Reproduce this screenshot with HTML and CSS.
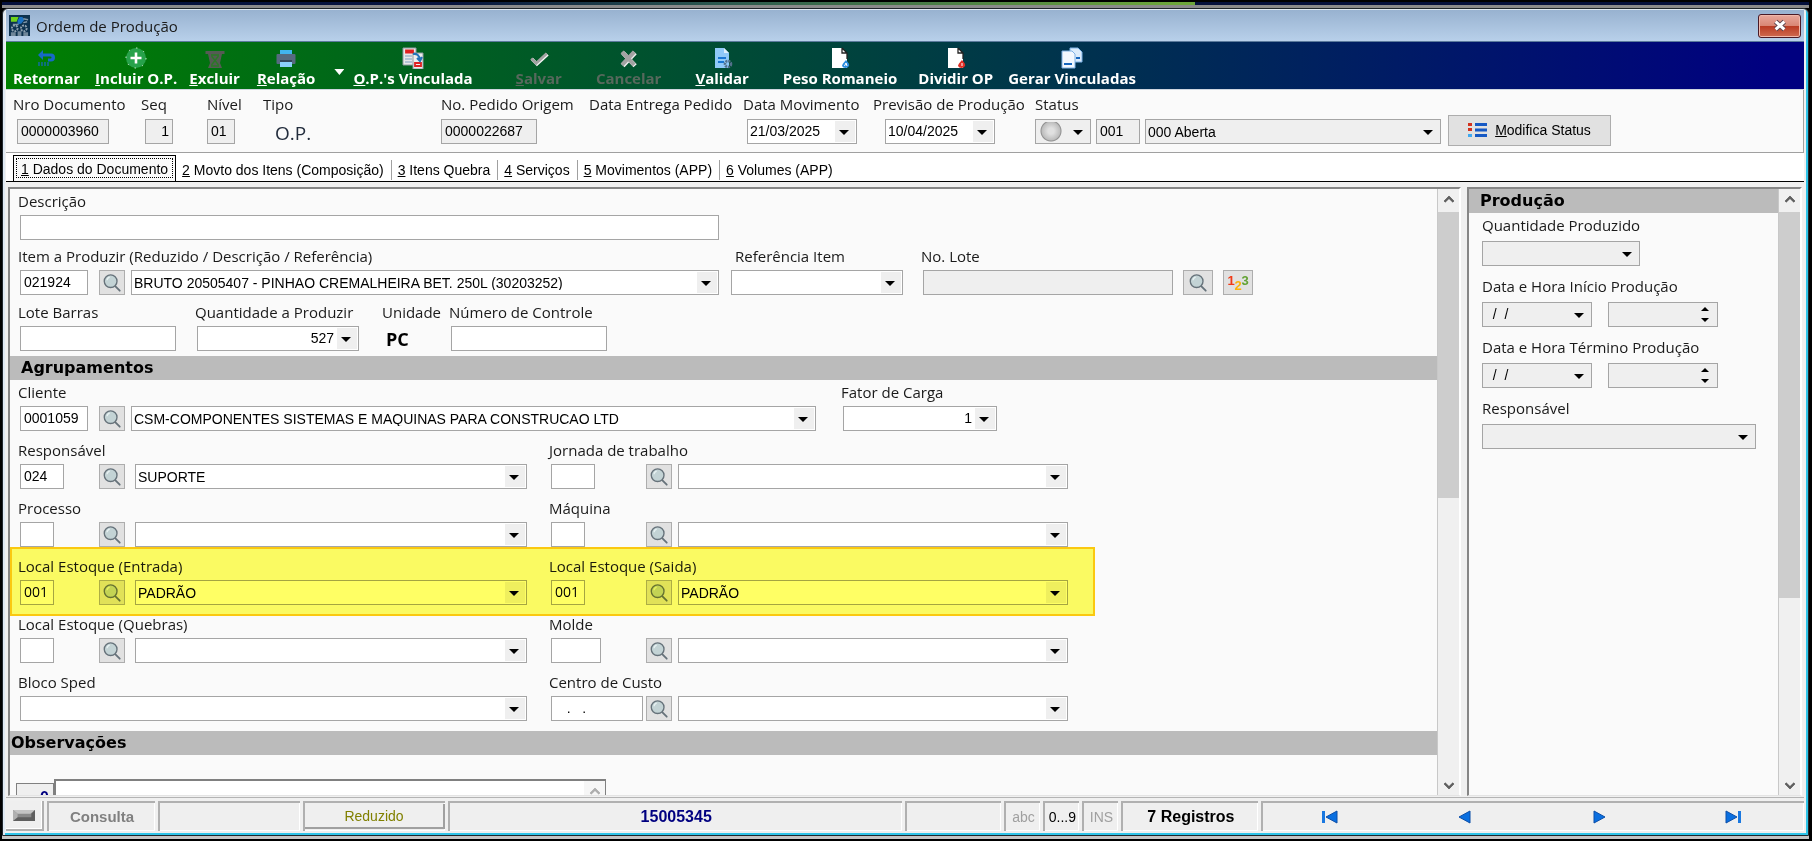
FILE: index.html
```html
<!DOCTYPE html>
<html lang="pt-BR">
<head>
<meta charset="utf-8">
<title>Ordem de Produção</title>
<link rel="stylesheet" href="styles.css">
</head>
<body>
<svg class="defs" aria-hidden="true">
  <symbol id="lens" viewBox="0 0 22 22">
    <path d="M14.500 14.500l5 5" stroke="#66727a" stroke-width="2" stroke-linecap="round"/>
    <circle cx="9.500" cy="9" r="7" fill="#c3d3d5" stroke="#66727a" stroke-width="1.500"/>
    <path d="M5.500 8a4 4 0 0 1 3-3.500" fill="none" stroke="#e6f0f1" stroke-width="1.500"/>
  </symbol>
</svg>
<div class="desk-strip"></div>
<main class="window">
  <header class="titlebar">
    <svg class="app-icon" viewBox="0 0 22 22" aria-hidden="true">
      <path fill="#0d3350" d="M0 0h22v22H0z"/>
      <path fill="#6fd21c" d="M2 2h8l-2 5H2z"/><path fill="#1c73c4" d="M9 6l2-4h3l2 3-3 4-4 1z"/>
      <path d="M15 4l5 1M15 8l4-1M4 10h6" stroke="#7f97a8" stroke-width="1.500"/>
      <g fill="none" stroke="#8ea2b0" stroke-width="2" stroke-dasharray="2 1"><circle cx="6" cy="14" r="3"/><circle cx="15.500" cy="14" r="3"/></g>
      <path fill="#70889a" d="M2 18h5v4H2zM9 17h4v5H9zM15 18h5v4h-5z"/>
    </svg>
    <h1>Ordem de Produção</h1>
    <button class="close" aria-label="Fechar"><svg viewBox="0 0 14 12"><path d="M3 2.500l8 7M11 2.500l-8 7" stroke="#5b4650" stroke-width="4.500"/><path d="M3 2.500l8 7M11 2.500l-8 7" stroke="#fff" stroke-width="2.800"/></svg></button>
  </header>

  <nav class="toolbar">
    <button class="tool"><svg viewBox="0 0 22 22"><path d="M2 8l5-5v3.500h8q4 0 4 4t-4 4h-3v-3h2.500q1 0 1-1t-1-1H7V13z" fill="#1769c8"/><path d="M3 15v4M6 15v4M9 15v4M12 15v4" stroke="#1769c8" stroke-width="1.200"/></svg><span>Retornar</span></button>
    <button class="tool t-incluir"><svg viewBox="0 0 22 22"><circle cx="11" cy="11" r="10" fill="#27a24b"/><circle cx="11" cy="11" r="10" fill="none" stroke="#d5ecd9" stroke-dasharray="1.500 6.300"/><path d="M11 5.500v11M5.500 11h11" stroke="#fff" stroke-width="2.600"/></svg><span><u>I</u>ncluir O.P.</span></button>
    <button class="tool t-excluir"><svg viewBox="0 0 22 22"><path d="M1.500 4h19v3h-19z" fill="#555b54"/><path d="M4 7h14l-2 9 2 5H4l2-5z" fill="#555b54"/><path d="M7.500 9l7 9M14.500 9l-7 9M7 8h8M7 19h8" stroke="#2a7a26" stroke-width="1.300"/></svg><span><u>E</u>xcluir</span></button>
    <button class="tool"><svg viewBox="0 0 22 22"><path d="M5 3h12v6H5z" fill="#42b4ee"/><rect x="1.500" y="7" width="19" height="10" rx="1" fill="#566a80"/><path d="M5 14h12v6H5z" fill="#8bd0fa"/><path d="M5 13h12v2H5z" fill="#33475d"/></svg><span><u>R</u>elação</span></button>
    <button class="drop" aria-label="Mais relações"></button>
    <button class="tool t-vinc"><svg viewBox="0 0 22 22"><path d="M1 1h13v17H1z" fill="#e8e8e8" stroke="#8f9aa0"/><path d="M11 6h10v16H11z" fill="#eee" stroke="#8f9aa0"/><path d="M4 3.500h7v2H4zM13 16h6v3h-6z" fill="none" stroke="#e02020" stroke-width="1.800"/><path d="M3 9h7M3 12h7M3 15h7" stroke="#7a9fc0"/><path d="M11 7q6-1 7 6m-3-2l3 3 2-4" fill="none" stroke="#2374b8" stroke-width="2"/></svg><span><u>O</u>.P.'s Vinculada</span></button>
    <button class="tool off t-salvar"><svg viewBox="-2 -3 27 27"><path d="M3 12l6 6L22 6" fill="none" stroke="#f4f4f4" stroke-width="4"/><path d="M2 11l6 6L21 5" fill="none" stroke="#a2a2a2" stroke-width="3.500"/></svg><span><u>S</u>alvar</span></button>
    <button class="tool off t-cancelar"><svg viewBox="-2 -3 27 27"><path d="M4 4l15 16M19 4L4 20" stroke="#eee" stroke-width="5.500"/><path d="M3 3l15 16M18 3L3 19" stroke="#a2a2a2" stroke-width="5"/></svg><span>Cancelar</span></button>
    <button class="tool t-validar"><svg viewBox="0 0 22 22"><path d="M4 1h9l5 5v15H4z" fill="#90c9f8"/><path d="M13 1l5 5h-5z" fill="#e0f0fd"/><path d="M7 11h8M7 15h6" stroke="#1976d2" stroke-width="2"/><circle cx="17" cy="17" r="3" fill="none" stroke="#53708b" stroke-width="2.600" stroke-dasharray="2 .8"/></svg><span><u>V</u>alidar</span></button>
    <button class="tool t-peso"><svg viewBox="0 0 22 22"><path d="M3 1h10l5 5v15H3z" fill="#fff"/><path d="M13 1l5 5v6M13 1v5h5" fill="none" stroke="#222" stroke-width="1.300"/><path d="M17 13q4 4 3 6-1 2-3.500 2T13 19q0-2 4-6z" fill="#2c8ee0"/><path d="M15.500 19l1.500-3 1 3" stroke="#fff" fill="none"/></svg><span>Peso Romaneio</span></button>
    <button class="tool t-dividir"><svg viewBox="0 0 22 22"><path d="M3 1h10l5 5v15H3z" fill="#fff"/><path d="M13 1l5 5v6M13 1v5h5" fill="none" stroke="#222" stroke-width="1.300"/><path d="M17 13q4 4 3 6-1 2-3.500 2T13 19q0-2 4-6z" fill="#e02f26"/><path d="M17 16v3" stroke="#fff"/></svg><span>Dividir OP</span></button>
    <button class="tool"><svg viewBox="0 0 22 22"><path d="M9 1h8l4 4v10H9z" fill="#dcecfb" stroke="#7fb2e6"/><path d="M1 4h10l3 3v14H1z" fill="#f3f8fe" stroke="#7fb2e6"/><path d="M3 17h8M15 11h4" stroke="#1666bd" stroke-width="2"/></svg><span>Gerar Vinculadas</span></button>
  </nav>

  <section class="doc">
    <div class="field c-doc"><label for="doc">Nro Documento</label><div class="line in4"><input id="doc" class="box w92 ro" readonly value="0000003960"></div></div>
    <div class="field c-seq"><label for="seq">Seq</label><div class="line in4"><input id="seq" class="box w28 ro num" readonly value="1"></div></div>
    <div class="field c-niv"><label for="niv">Nível</label><div class="line"><input id="niv" class="box w28 ro" readonly value="01"></div></div>
    <div class="field c-tipo"><span class="lbl">Tipo</span><div class="line in12"><output class="op">O.P.</output></div></div>
    <div class="field c-ped"><label for="ped">No. Pedido Origem</label><div class="line"><input id="ped" class="box w96 ro" readonly value="0000022687"></div></div>
    <div class="field c-ent"><span class="lbl">Data Entrega Pedido</span></div>
    <div class="field c-mov"><label for="mov">Data Movimento</label><div class="line in4"><span class="combo w110"><input id="mov" value="21/03/2025"></span></div></div>
    <div class="field c-prev"><label for="prev">Previsão de Produção</label><div class="line in12"><span class="combo w110"><input id="prev" value="10/04/2025"></span></div></div>
    <div class="field c-status"><label for="st">Status</label>
      <div class="line gap5">
        <span class="combo ro w56 ball"><select aria-label="Cor do status"><option></option></select></span>
        <input class="box w44 ro" readonly value="001" aria-label="Código do status">
        <span class="combo ro grow"><select id="st"><option>000 Aberta</option></select></span>
      </div>
    </div>
    <button class="btn-status"><svg viewBox="0 0 20 16"><path d="M0 1h4v3H0zM0 6h4v3H0z" fill="#d2321e"/><path d="M0 12h4v3H0z" fill="#3fa9f0"/><path d="M7 2.500h12M7 8h12M7 13.500h12" stroke="#1659c4" stroke-width="3"/></svg><span><u>M</u>odifica Status</span></button>
  </section>

  <div class="tabs" role="tablist">
    <button role="tab" class="tab on" aria-selected="true"><u>1</u> Dados do Documento</button>
    <button role="tab" class="tab"><u>2</u> Movto dos Itens (Composição)</button>
    <button role="tab" class="tab"><u>3</u> Itens Quebra</button>
    <button role="tab" class="tab"><u>4</u> Serviços</button>
    <button role="tab" class="tab"><u>5</u> Movimentos (APP)</button>
    <button role="tab" class="tab"><u>6</u> Volumes (APP)</button>
  </div>

  <div class="panes">
    <section class="pane form">
      <div class="content">
        <div class="rows top">
          <div class="row"><div class="field f-desc"><label for="desc">Descrição</label><div class="line in2"><input id="desc" class="box grow"></div></div></div>
          <div class="row">
            <div class="field f-item"><label for="item">Item a Produzir (Reduzido / Descrição / Referência)</label>
              <div class="line in2"><span class="slot"><input id="item" class="box w68" value="021924"></span><button class="sq" aria-label="Pesquisar item"><svg><use href="#lens"/></svg></button><span class="combo grow ml6"><select aria-label="Descrição do item"><option>BRUTO 20505407 - PINHAO CREMALHEIRA BET. 250L (30203252)</option></select></span></div></div>
            <div class="field f-ref"><label for="ref" class="in4">Referência Item</label><div class="line"><span class="combo w172"><select id="ref"><option></option></select></span></div></div>
            <div class="field"><label for="lote">No. Lote</label><div class="line in2 gap10"><input id="lote" class="box ro w250" readonly><button class="sq wide" aria-label="Pesquisar lote"><svg><use href="#lens"/></svg></button><button class="sq wide n123" aria-label="Numeração"><b>1</b><b>2</b><b>3</b></button></div></div>
          </div>
          <div class="row late">
            <div class="field f-barras"><label for="barras">Lote Barras</label><div class="line in2"><input id="barras" class="box w156"></div></div>
            <div class="field f-qtd"><label for="qtd">Quantidade a Produzir</label><div class="line in2"><span class="combo num w162"><input id="qtd" value="527"></span></div></div>
            <div class="field f-un"><span class="lbl">Unidade</span><div class="line in4"><output class="pc">PC</output></div></div>
            <div class="field"><label for="ctrl">Número de Controle</label><div class="line in2"><input id="ctrl" class="box w156"></div></div>
          </div>
        </div>
        <h2 class="bar pad">Agrupamentos</h2>
        <div class="rows group">
          <div class="row">
            <div class="field f-cli"><label for="cli">Cliente</label><div class="line in2"><span class="slot"><input id="cli" class="box w68" value="0001059"></span><button class="sq" aria-label="Pesquisar cliente"><svg><use href="#lens"/></svg></button><span class="combo grow ml6"><select aria-label="Nome do cliente"><option>CSM-COMPONENTES SISTEMAS E MAQUINAS PARA CONSTRUCAO LTD</option></select></span></div></div>
            <div class="field"><label for="fator">Fator de Carga</label><div class="line in2"><span class="combo num w154"><input id="fator" value="1"></span></div></div>
          </div>
          <div class="row pair">
            <div class="field"><label for="resp">Responsável</label><div class="line in2"><span class="slot"><input id="resp" class="box w44" value="024"></span><button class="sq" aria-label="Pesquisar responsável"><svg><use href="#lens"/></svg></button><span class="combo grow ml10"><select aria-label="Nome do responsável"><option>SUPORTE</option></select></span></div></div>
            <div class="field"><label for="jor">Jornada de trabalho</label><div class="line in2"><span class="slot r"><input id="jor" class="box w44"></span><button class="sq" aria-label="Pesquisar jornada"><svg><use href="#lens"/></svg></button><span class="combo grow ml6"><select aria-label="Descrição da jornada"><option></option></select></span></div></div>
          </div>
          <div class="row pair">
            <div class="field"><label for="proc">Processo</label><div class="line in2"><span class="slot"><input id="proc" class="box w34"></span><button class="sq" aria-label="Pesquisar processo"><svg><use href="#lens"/></svg></button><span class="combo grow ml10"><select aria-label="Descrição do processo"><option></option></select></span></div></div>
            <div class="field"><label for="maq">Máquina</label><div class="line in2"><span class="slot r"><input id="maq" class="box w34"></span><button class="sq" aria-label="Pesquisar máquina"><svg><use href="#lens"/></svg></button><span class="combo grow ml6"><select aria-label="Descrição da máquina"><option></option></select></span></div></div>
          </div>
          <div class="row pair marked">
            <div class="field"><label for="ent">Local Estoque (Entrada)</label><div class="line in2"><span class="slot"><input id="ent" class="box w34 code" value="001"></span><button class="sq" aria-label="Pesquisar local de entrada"><svg><use href="#lens"/></svg></button><span class="combo grow ml10"><select aria-label="Local de entrada"><option>PADRÃO</option></select></span></div></div>
            <div class="field"><label for="sai">Local Estoque (Saida)</label><div class="line in2"><span class="slot r"><input id="sai" class="box w34 code" value="001"></span><button class="sq" aria-label="Pesquisar local de saída"><svg><use href="#lens"/></svg></button><span class="combo grow ml6"><select aria-label="Local de saída"><option>PADRÃO</option></select></span></div></div>
          </div>
          <div class="row pair">
            <div class="field"><label for="que">Local Estoque (Quebras)</label><div class="line in2"><span class="slot"><input id="que" class="box w34"></span><button class="sq" aria-label="Pesquisar local de quebras"><svg><use href="#lens"/></svg></button><span class="combo grow ml10"><select aria-label="Local de quebras"><option></option></select></span></div></div>
            <div class="field"><label for="mol">Molde</label><div class="line in2"><span class="slot r"><input id="mol" class="box w50"></span><button class="sq" aria-label="Pesquisar molde"><svg><use href="#lens"/></svg></button><span class="combo grow ml6"><select aria-label="Descrição do molde"><option></option></select></span></div></div>
          </div>
          <div class="row pair">
            <div class="field"><label for="sped">Bloco Sped</label><div class="line in2"><span class="combo grow"><select id="sped"><option></option></select></span></div></div>
            <div class="field"><label for="cc">Centro de Custo</label><div class="line in2"><span class="slot r"><input id="cc" class="box w92" value="   .   ."></span><button class="sq" aria-label="Pesquisar centro de custo"><svg><use href="#lens"/></svg></button><span class="combo grow ml6"><select aria-label="Descrição do centro de custo"><option></option></select></span></div></div>
          </div>
        </div>
        <h2 class="bar">Observações</h2>
        <div class="notes"><output class="count">0</output><div class="memo"><textarea aria-label="Observações"></textarea><i class="chev up"></i></div></div>
      </div>
      <div class="scroll"><i class="chev up"></i><div class="track"><div class="thumb t1"></div></div><i class="chev down"></i></div>
    </section>

    <aside class="pane side">
      <div class="content">
        <h2 class="bar pad">Produção</h2>
        <div class="side-rows">
          <div class="field"><label for="qp">Quantidade Produzido</label><div class="line"><span class="combo ro w158"><select id="qp"><option></option></select></span></div></div>
          <div class="field"><label for="di">Data e Hora Início Produção</label><div class="line gap16"><span class="combo ro w110"><input id="di" value="  /  /"></span><span class="spin"><input aria-label="Hora de início"></span></div></div>
          <div class="field"><label for="dt">Data e Hora Término Produção</label><div class="line gap16"><span class="combo ro w110"><input id="dt" value="  /  /"></span><span class="spin"><input aria-label="Hora de término"></span></div></div>
          <div class="field"><label for="rp">Responsável</label><div class="line"><span class="combo ro w274"><select id="rp"><option></option></select></span></div></div>
        </div>
      </div>
      <div class="scroll"><i class="chev up"></i><div class="track"><div class="thumb t2"></div></div><i class="chev down"></i></div>
    </aside>
  </div>

  <footer class="status">
    <button class="cell s-led" aria-label="Estado"><svg viewBox="0 0 24 12"><path d="M0 0h24v12H0z" fill="#8a8a8a"/><path d="M0 0h24l-5 4H5z" fill="#c4c4c4"/><path d="M0 12h24V0l-4 4v4H0z" fill="#5f5f5f"/><path d="M0 0v12l5-4V4z" fill="#b0b0b0"/></svg></button>
    <span class="cell s-mode">Consulta</span>
    <span class="cell s-blank"></span>
    <span class="cell s-red"><button>Reduzido</button></span>
    <span class="cell s-code">15005345</span>
    <span class="cell s-blank2"></span>
    <span class="cell s-key off">abc</span>
    <span class="cell s-key">0...9</span>
    <span class="cell s-key off">INS</span>
    <span class="cell s-reg">7 Registros</span>
    <span class="cell s-nav">
      <button aria-label="Primeiro"><svg viewBox="0 0 16 14"><path d="M0 1h3v12H0z" fill="#1a78e0"/><path d="M15 1v12L4 7z" fill="#0a6fe0" stroke="#0b4ea8"/></svg></button>
      <button aria-label="Anterior"><svg viewBox="0 0 16 14"><path d="M13 1v12L2 7z" fill="#0a6fe0" stroke="#0b4ea8"/></svg></button>
      <button aria-label="Próximo"><svg viewBox="0 0 16 14"><path d="M3 1v12l11-6z" fill="#0a6fe0" stroke="#0b4ea8"/></svg></button>
      <button aria-label="Último"><svg viewBox="0 0 16 14"><path d="M13 1h3v12h-3z" fill="#1a78e0"/><path d="M1 1v12l11-6z" fill="#0a6fe0" stroke="#0b4ea8"/></svg></button>
    </span>
  </footer>
</main>
</body>
</html>
```
FILE: styles.css
```css
* { box-sizing: border-box; margin: 0; }
body {
  height: 100vh; display: flex; flex-direction: column; overflow: hidden;
  background: #000; padding: 2px 3px 5px 2px;
  font: 15px/20px "Open Sans", "Noto Sans", sans-serif; color: #1a1a1a;
}
button, input, select, textarea { font: inherit; color: inherit; padding: 0; border: 0; border-radius: 0; background: none; }
svg { display: block; }
.defs { position: absolute; width: 0; height: 0; }

.desk-strip { flex: none; height: 6px; background: linear-gradient(90deg, #04103c, #06143f 25%, #2c5a50 40%, #6da63a 65%, #6da63a 66%, #04103c 66%); border-bottom: 3px solid #8a8a8a; }
.window {
  flex: 1; min-height: 0; display: flex; flex-direction: column;
  background: #f0f0f0; border: 1px solid #20282e; border-radius: 6px 6px 0 0; overflow: hidden;
  box-shadow: inset 2px 1px 0 #dfe9f3, inset -2px -2px 0 #2fc4e8, 0 3px 0 #c4c4c4;
  padding: 1px 4px 3px 3px;
}

/* title bar */
.titlebar { flex: none; height: 32px; display: flex; align-items: center; gap: 6px; padding: 0 3px; background: linear-gradient(#98b2d0, #b8d0ea); border-bottom: 1px solid #5b7a9c; }
.app-icon { width: 21px; height: 21px; }
.titlebar h1 { flex: 1; font-size: 15px; font-weight: 400; }
.close { width: 43px; height: 24px; display: grid; place-items: center; border: 1px solid #4a1a26; border-radius: 3px; background: linear-gradient(#e8a89c, #d98775 48%, #b93a22 50%, #cf6a50); box-shadow: inset 0 0 0 1px #f0b8aa; }
.close svg { width: 16px; height: 13px; }

/* toolbar */
.toolbar { flex: none; height: 48px; display: flex; align-items: flex-end; padding: 0 7px 2px; background: linear-gradient(90deg, #008000, #000080 98%); border-bottom: 1px solid #cfd6e0; color: #fff; font-weight: 700; line-height: 18px; }
.tool { display: flex; flex-direction: column; align-items: center; white-space: nowrap; margin-right: 15px; }
.tool svg { width: 22px; height: 22px; }
.tool.off { color: #56685c; }
.tool.t-incluir { margin-right: 12px; }
.tool.t-excluir { margin-right: 17px; }
.drop { width: 10px; height: 6px; background: #fff; clip-path: polygon(0 0, 100% 0, 50% 100%); margin: 0 9px 12px 4px; align-self: flex-end; }
.tool.t-vinc { margin-right: 43px; }
.tool.t-salvar, .tool.t-cancelar, .tool.t-validar { margin-right: 34px; }
.tool.t-peso { margin-right: 21px; }

/* document header */
.doc { flex: none; height: 63px; display: flex; padding: 4px 7px 0; background: #fafafa; border-bottom: 1px solid #a0a0a0; border-right: 1px solid #a0a0a0; }
.doc .field { gap: 5px; }
.c-doc { width: 128px; } .c-seq { width: 66px; } .c-niv { width: 56px; } .c-tipo { width: 178px; }
.c-ped { width: 148px; } .c-ent { width: 154px; } .c-mov { width: 130px; } .c-prev { width: 162px; }
.c-status { width: 406px; }
.op { font-size: 19px; font-weight: 500; color: #222c3c; line-height: 20px; padding-top: 2px; }
.btn-status { width: 163px; height: 31px; margin: 21px 0 0 7px; padding-bottom: 2px; display: flex; align-items: center; justify-content: center; gap: 7px; background: #e1e1e1; border: 1px solid #adadad; font: 14px/20px "Liberation Sans", Arial, sans-serif; color: #000; }
.btn-status svg { width: 20px; height: 16px; }

/* fields */
.field { display: flex; flex-direction: column; gap: 4px; flex: none; min-width: 0; }
.field label, .lbl { white-space: nowrap; height: 20px; }
.line { display: flex; align-items: center; height: 25px; }
.in2 { padding-left: 2px; } .in4 { padding-left: 4px; } .in12 { padding-left: 12px; }
.gap5 { gap: 5px; } .gap10 { gap: 10px; } .gap16 { gap: 16px; }
.ml6 { margin-left: 6px; } .ml10 { margin-left: 10px; }
.box, .combo, .spin { height: 25px; border: 1px solid #a5a5a5; background: #fff; font: 14px/20px "Liberation Sans", Arial, sans-serif; color: #000; }
.box { padding: 0 3px 2px; flex: none; min-width: 0; white-space: pre; }
.box.grow, .combo.grow { flex: 1; }
.box.ro, .combo.ro, .spin { background: #efefef; }
.box.num { text-align: right; }
.box.code { font: 14px/20px "Open Sans", sans-serif; }
.combo { display: flex; flex: none; min-width: 0; padding: 2px 2px 2px 1px; position: relative; }
.combo select, .combo input { appearance: none; flex: 1; width: 100%; min-width: 0; height: 19px; padding: 0 22px 2px 1px; white-space: pre; }
.combo.num input { text-align: right; }
.combo::before { content: ""; position: absolute; inset: 1px 1px 1px auto; width: 20px; background: #efefef; }
.combo::after { content: ""; position: absolute; right: 7px; top: 10px; width: 10px; height: 5px; background: #000; clip-path: polygon(0 0, 100% 0, 50% 100%); }
.ball select { background: radial-gradient(circle at 14px 9px, #e0e0e0 0 3px, #bdbdbd 9px, #8f8f8f 10px, transparent 11px); height: 21px; }
.spin { width: 110px; position: relative; display: flex; }
.spin input { width: 80px; }
.spin::before, .spin::after { content: ""; position: absolute; right: 8px; width: 8px; height: 4px; background: #000; }
.spin::before { top: 4px; clip-path: polygon(50% 0, 100% 100%, 0 100%); }
.spin::after { bottom: 4px; clip-path: polygon(0 0, 100% 0, 50% 100%); }
.sq { flex: none; width: 26px; height: 25px; display: grid; place-items: center; background: #e1e1e1; border: 1px solid #adadad; }
.sq.wide { width: 30px; }
.sq svg { width: 20px; height: 20px; }
.sq.n123 { display: flex; align-items: center; justify-content: center; font: 700 13px/12px "Liberation Sans", sans-serif; }
.n123 b { width: 7px; }
.n123 b:nth-child(1) { color: #f03a17; padding-bottom: 3px; }
.n123 b:nth-child(2) { color: #fbb30a; padding-top: 6px; }
.n123 b:nth-child(3) { color: #62a233; padding-bottom: 3px; }
.w28 { width: 28px; } .w34 { width: 34px; } .w44 { width: 44px; } .w50 { width: 50px; } .w56 { width: 56px; }
.w68 { width: 68px; } .w92 { width: 92px; } .w96 { width: 96px; } .w110 { width: 110px; } .w154 { width: 154px; }
.w156 { width: 156px; } .w158 { width: 158px; } .w162 { width: 162px; } .w172 { width: 172px; } .w250 { width: 250px; } .w274 { width: 274px; }
.slot { width: 79px; flex: none; display: flex; }
.slot.r { width: 95px; }

/* tabs */
.tabs { flex: none; height: 29px; display: flex; align-items: flex-end; padding-left: 7px; background: #fff; border-bottom: 1px solid #000; font: 14px/20px "Liberation Sans", Arial, sans-serif; color: #000; }
.tab { padding: 0 7px 0 6px; height: 20px; margin-bottom: 1px; border-right: 1px solid #a0a0a0; white-space: nowrap; }
.tab:last-child { border-right: 0; }
.tab.on { height: 26px; margin: 0; padding: 0 7px; background: #fafafa; border: 1px solid #000; border-bottom: 0; outline: 1px dotted #000; outline-offset: -4px; }

/* panes */
.panes { flex: 1; min-height: 0; display: flex; gap: 6px; padding: 5px 2px 1px; background: #f0f0f0; border-bottom: 1px solid #b4b4b4; }
.pane { min-width: 0; display: flex; border: 2px solid #868686; border-right-color: #fff; border-bottom: 1px solid #e4e4e4; overflow: hidden; background: #fafafa; }
.form { flex: 1; }
.side { flex: none; width: 335px; }
.content { flex: 1; min-width: 0; overflow: hidden; }
.rows { padding: 2px 8px 0; display: flex; flex-direction: column; align-items: flex-start; }
.rows.top { gap: 6px; padding-bottom: 5px; }
.rows.group { gap: 9px; padding-bottom: 10px; }
.row { display: flex; }
.late { margin-top: 1px; }
.f-desc { width: 701px; }
.f-item { width: 701px; }
.f-ref { margin-left: 12px; width: 190px; }
.f-barras { width: 177px; } .f-qtd { width: 187px; } .f-un { width: 67px; }
.f-cli { width: 798px; margin-right: 25px; }
.pair { gap: 22px; }
.pair .field:first-child { width: 509px; }
.pair .field:last-child { width: 519px; }
.pc { font-size: 18px; font-weight: 700; color: #000; }
.marked { position: relative; }
.marked::after { content: ""; position: absolute; inset: -9px -27px -11px -8px; background: #ffff64; border: 2px solid #ffcc10; mix-blend-mode: multiply; pointer-events: none; }
.bar { height: 24px; padding-left: 1px; background: #bbb; font: 700 16px/23px "DejaVu Sans", Verdana, sans-serif; color: #000; }
.bar.pad { padding-left: 11px; }
.side-rows { padding: 2px 13px; display: flex; flex-direction: column; gap: 10px; }
.side-rows .field { gap: 6px; }
.notes { display: flex; padding: 24px 0 0 6px; align-items: flex-start; }
.count { width: 38px; height: 24px; margin-top: 4px; padding: 4px 4px 0; text-align: right; background: #efefef; border: 1px solid #808080; font: 700 16px/20px "Liberation Sans", Arial, sans-serif; color: #000080; }
.memo { width: 552px; height: 60px; display: flex; border: 2px solid #808080; border-right-width: 1px; background: #fff; }
.memo textarea { flex: 1; resize: none; outline: 0; }
.memo .chev { background-color: #efefef; opacity: .5; }

.scroll { flex: none; width: 22px; display: flex; flex-direction: column; background: #f0f0f0; border-left: 1px solid #c8c8c8; }
.track { flex: 1; }
.thumb { background: #cdcdcd; }
.t1 { height: 51%; } .t2 { height: 69%; }
.chev { flex: none; width: 21px; height: 23px; display: grid; place-items: center; }
.chev::before { content: ""; width: 8px; height: 8px; background: #606060; clip-path: polygon(0 0, 100% 0, 100% 32%, 32% 32%, 32% 100%, 0 100%); transform: rotate(45deg); }
.chev.down::before { transform: rotate(225deg); }

/* status bar */
.status { flex: none; height: 34px; display: flex; gap: 3px; padding: 3px 0 1px; font: 14px/20px "Liberation Sans", Arial, sans-serif; color: #000; }
.cell { flex: none; display: flex; align-items: center; justify-content: center; background: #efefef; border: solid #b0b0b0; border-width: 2px 0 0 2px; box-shadow: inset -1px -1px 0 #fff; min-width: 0; }
.s-led { width: 38px; border-width: 0 2px 2px 0; }
.s-led svg { width: 22px; height: 11px; }
.s-mode { width: 108px; font-size: 15px; font-weight: 700; color: #808080; }
.s-blank { width: 142px; }
.s-red { width: 142px; }
.s-red button { flex: 1; align-self: stretch; margin: 1px 0 2px; background: #efefef; border: solid #a0a0a0; border-width: 0 2px 2px 0; color: #808000; }
.s-code { flex: 457 1 0; font-size: 16px; font-weight: 700; color: #000080; }
.s-blank2 { width: 96px; }
.s-key { width: 36px; } .s-key.off { color: #a0a0a0; }
.s-reg { width: 137px; font-size: 16px; font-weight: 700; }
.s-nav { flex: 542 1 0; padding-right: 4px; }
.s-nav button { flex: 1; display: grid; place-items: center; }
.s-nav svg { width: 16px; height: 14px; }
```
